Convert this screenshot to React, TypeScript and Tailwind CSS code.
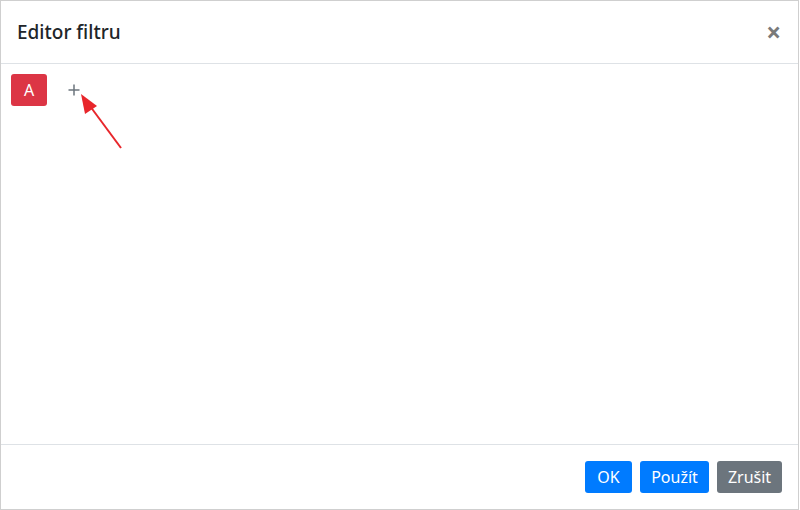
import React from "react";

export default function App() {
  return (
    <div
      className="w-[800px] h-[510px] bg-white relative"
      style={{ fontFamily: '"Segoe UI", "Noto Sans", "Open Sans", Arial, sans-serif' }}
    >
      <div className="w-[799px] h-[510px] border border-[#cfcfcf] flex flex-col">
        <div className="h-[63px] border-b border-[#dee2e6] flex items-center justify-between pl-[16px] pr-[17px] shrink-0">
          <h5 className="text-[19px] text-[#212529] font-medium leading-none mt-[1px]">Editor filtru</h5>
          <span className="text-[#7a7a7a] text-[26px] font-bold leading-none mt-[-1px]">×</span>
        </div>
        <div className="flex-1 relative pt-[10px] pl-[10px]">
          <div className="flex items-center gap-[16px]">
            <button className="w-[36px] h-[32px] rounded-[3px] bg-[#dc3545] text-white text-[16px] flex items-center justify-center">
              A
            </button>
            <svg width="16" height="16" viewBox="0 0 16 16" className="mt-[-1px] ml-[3px]">
              <path d="M8 2.5v11M2.5 8h11" stroke="#6c757d" strokeWidth="1.5" />
            </svg>
          </div>
          <svg className="absolute left-0 top-0" width="140" height="160" viewBox="0 0 140 160">
            <line x1="120" y1="84" x2="86" y2="38" stroke="#e8262b" strokeWidth="2" />
            <polygon points="80,30 96,42 84,50" fill="#e8262b" />
          </svg>
        </div>
        <div className="h-[65px] border-t border-[#dee2e6] flex items-center justify-end gap-[8px] pr-[16px] shrink-0">
          <button className="w-[47px] h-[32px] rounded-[3px] bg-[#007bff] text-white text-[16px] leading-none">OK</button>
          <button className="w-[69px] h-[32px] rounded-[3px] bg-[#007bff] text-white text-[16px] leading-none">Použít</button>
          <button className="w-[65px] h-[32px] rounded-[3px] bg-[#6c757d] text-white text-[16px] leading-none">Zrušit</button>
        </div>
      </div>
    </div>
  );
}
